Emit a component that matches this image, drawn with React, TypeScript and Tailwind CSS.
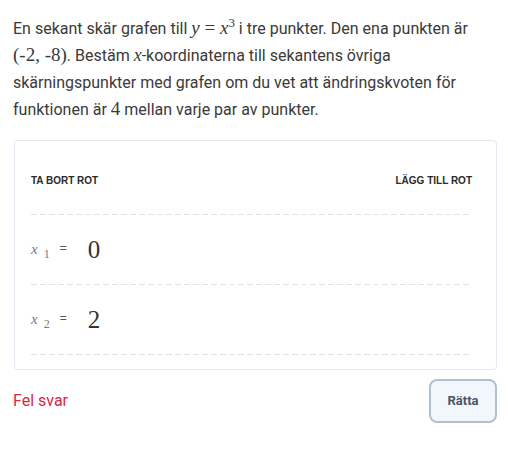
const serif = "font-['Liberation_Serif','DejaVu_Serif',serif]";

const Dash = () => (
    <div className="h-px w-full bg-[linear-gradient(to_right,#dbe2ea_65%,transparent_0)] bg-[length:9px_1px] bg-repeat-x" />
);

const roots = ['0', '2'];

export default function App() {
    return (
        <div className="w-[508px] h-[455px] bg-white px-[13px] pt-[15px] font-['Roboto','Liberation_Sans',sans-serif] text-[#3a3a3a]">
            <p className="text-[16px] leading-[27px]">
                En sekant skär grafen till{' '}
                <span className={`${serif} text-[19px] leading-none`}>
                    <i>y</i> = <i>x</i>
                    <span className="relative -top-[7px] text-[13px] leading-none">3</span>
                </span>{' '}
                i tre punkter. Den ena punkten är
                <br />
                <span className={`${serif} text-[19px] leading-none`}>(-2, -8)</span>. Bestäm{' '}
                <i className={`${serif} text-[18px] leading-none`}>x</i>-koordinaterna till sekantens övriga
                <br />
                skärningspunkter med grafen om du vet att ändringskvoten för
                <br />
                funktionen är <span className={`${serif} text-[19px] leading-none`}>4</span> mellan varje par av punkter.
            </p>

            <div className="mt-[17px] ml-px mr-[-2px] rounded border border-[#e1e7ef] px-4 pb-[14px]">
                <div className="flex items-center justify-between pt-[34px] pb-[27px] font-['Liberation_Sans',sans-serif] text-[10px] leading-[12px] font-bold text-[#2a2a2a]">
                    <span>TA BORT ROT</span>
                    <span className="mr-[8px]">LÄGG TILL ROT</span>
                </div>
                <div className="mr-[8px]">
                    <Dash />
                    {roots.map((r, i) => (
                        <div key={i}>
                            <div className="flex h-[69px] items-center">
                                <span className={`${serif} text-[15px] italic text-[#7a7a7a]`}>x</span>
                                <span className={`${serif} ml-[6px] mt-[8px] text-[12px] text-[#7a7a7a]`}>{i + 1}</span>
                                <span className="ml-[10px] -mt-[4px] font-['Liberation_Sans',sans-serif] text-[12px] text-[#555]">=</span>
                                <span className={`${serif} ml-[21px] text-[25px] text-[#333]`}>{r}</span>
                            </div>
                            <Dash />
                        </div>
                    ))}
                </div>
            </div>

            <div className="mt-[9px] flex items-center justify-between">
                <span className="text-[16px] text-[#d9283f]">Fel svar</span>
                <button className="mr-[-2px] h-[44px] w-[68px] rounded-lg border-2 border-[#b3bfcc] bg-[#f2f7fd] text-[13px] font-bold text-[#4a5567]">
                    Rätta
                </button>
            </div>
        </div>
    );
}
